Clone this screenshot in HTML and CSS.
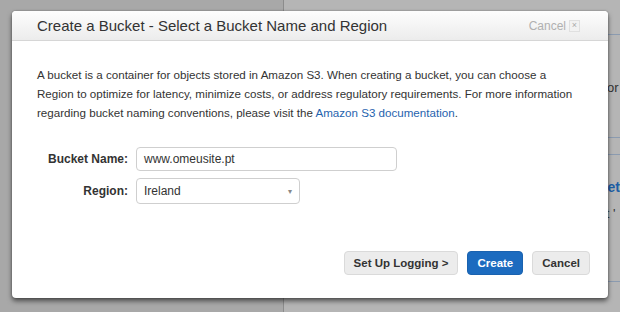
FILE: index.html
```html
<!DOCTYPE html>
<html lang="en">
<head>
  <meta charset="UTF-8">
  <title>Create a Bucket</title>
  <link rel="stylesheet" href="styles.css">
</head>
<body>
  <div class="console">
    <div class="side-panel"></div>
    <div class="main-panel">
      <div class="row row-top"></div>
      <div class="row row-props"><span class="tail">Monitor</span></div>
      <div class="row row-gap"></div>
      <div class="row row-bucket">
        <span class="tail link">Bucket</span>
        <span class="tail small">Select '</span>
      </div>
    </div>
  </div>

  <div class="modal">
    <div class="modal-header">
      <h2 class="modal-title">Create a Bucket - Select a Bucket Name and Region</h2>
      <a class="modal-close">Cancel <span class="close-box">&times;</span></a>
    </div>
    <div class="modal-body">
      <p class="intro">
        A bucket is a container for objects stored in Amazon S3. When creating a bucket, you can choose a<br>
        Region to optimize for latency, minimize costs, or address regulatory requirements. For more information<br>
        regarding bucket naming conventions, please visit the <a href="#">Amazon S3 documentation</a>.
      </p>
      <div class="form">
        <div class="form-row">
          <label class="form-label">Bucket Name:</label>
          <div class="input name-input">www.omeusite.pt</div>
        </div>
        <div class="form-row">
          <label class="form-label">Region:</label>
          <div class="input select">
            <span>Ireland</span>
            <span class="caret">&#9662;</span>
          </div>
        </div>
      </div>
    </div>
    <div class="modal-footer">
      <button class="btn">Set Up Logging &gt;</button>
      <button class="btn btn-primary">Create</button>
      <button class="btn">Cancel</button>
    </div>
  </div>
</body>
</html>
```

FILE: styles.css
```css
body {
  margin: 0;
  font-family: "Liberation Sans", Arial, sans-serif;
  color: #333;
  width: 620px;
  height: 312px;
  overflow: hidden;
  position: relative;
}
.console {
  display: flex;
  height: 312px;
}
.side-panel {
  width: 290px;
  background-color: #a8a8a8;
  border-right: 1px solid #8c8c8c;
}
.main-panel {
  flex: 1;
  background-color: #b5b5b5;
  display: flex;
  flex-direction: column;
}
.row {
  border-bottom: 1px solid #8b9bb0;
  display: flex;
  flex-direction: column;
  align-items: flex-start;
  overflow: hidden;
  white-space: nowrap;
  padding-left: 291px;
}
.row-top {
  height: 34px;
}
.row-props {
  height: 102px;
}
.row-gap {
  height: 16px;
}
.row-bucket {
  height: 126px;
}
.tail {
  font-size: 13px;
  color: #333;
}
.row-props .tail {
  margin-top: 45px;
}
.tail.link {
  color: #1d5fa6;
  font-weight: bold;
  font-size: 14px;
  margin-top: 24px;
  margin-left: -2px;
}
.tail.small {
  margin-top: 11px;
  margin-left: -2px;
}

.modal {
  position: absolute;
  left: 12px;
  top: 11px;
  width: 596px;
  height: 287px;
  background-color: #fff;
  border-radius: 4px;
  box-shadow: 0 3px 5px rgba(0, 0, 0, 0.55), 0 0 2px rgba(0, 0, 0, 0.3);
  display: flex;
  flex-direction: column;
}
.modal-header {
  height: 29px;
  background: linear-gradient(to bottom, #fdfdfd, #ececec);
  border-bottom: 1px solid #d6d6d6;
  border-radius: 4px 4px 0 0;
  display: flex;
  align-items: center;
  justify-content: space-between;
  padding: 0 28px 0 25px;
}
.modal-title {
  margin: 0;
  font-size: 15px;
  font-weight: normal;
  color: #333;
}
.modal-close {
  font-size: 12px;
  color: #b0b0b0;
  display: flex;
  align-items: center;
  gap: 3px;
}
.close-box {
  display: inline-block;
  width: 9px;
  height: 10px;
  line-height: 9px;
  font-size: 9px;
  text-align: center;
  border: 1px solid #e0e0e0;
  background-color: #f2f2f2;
  color: #aaa;
}
.modal-body {
  flex: 1;
  padding: 24px 25px 0 25px;
}
.intro {
  margin: 0;
  font-size: 11.6px;
  line-height: 19px;
  white-space: nowrap;
}
.intro a {
  color: #1f63ae;
  text-decoration: none;
}
.form {
  margin-top: 25px;
  display: flex;
  flex-direction: column;
  gap: 7px;
}
.form-row {
  display: flex;
  align-items: center;
}
.form-label {
  width: 91px;
  text-align: right;
  font-size: 12px;
  font-weight: bold;
  color: #333;
  margin-right: 8px;
}
.input {
  height: 24px;
  box-sizing: border-box;
  border: 1px solid #cfcfcf;
  border-radius: 4px;
  font-size: 12px;
  color: #333;
  padding: 0 7px;
  display: flex;
  align-items: center;
}
.name-input {
  width: 261px;
}
.select {
  width: 164px;
  height: 26px;
  justify-content: space-between;
}
.caret {
  font-size: 8px;
  color: #888;
}
.modal-footer {
  display: flex;
  justify-content: flex-end;
  gap: 9px;
  padding: 0 18px 23px 0;
}
.btn {
  height: 24px;
  padding: 0 9px;
  font-family: "Liberation Sans", Arial, sans-serif;
  font-size: 11.5px;
  font-weight: bold;
  color: #333;
  background-color: #ececec;
  border: 1px solid #dadada;
  border-radius: 4px;
}
.btn-primary {
  background-color: #1c6bbf;
  border-color: #1a62af;
  color: #fff;
}
```
